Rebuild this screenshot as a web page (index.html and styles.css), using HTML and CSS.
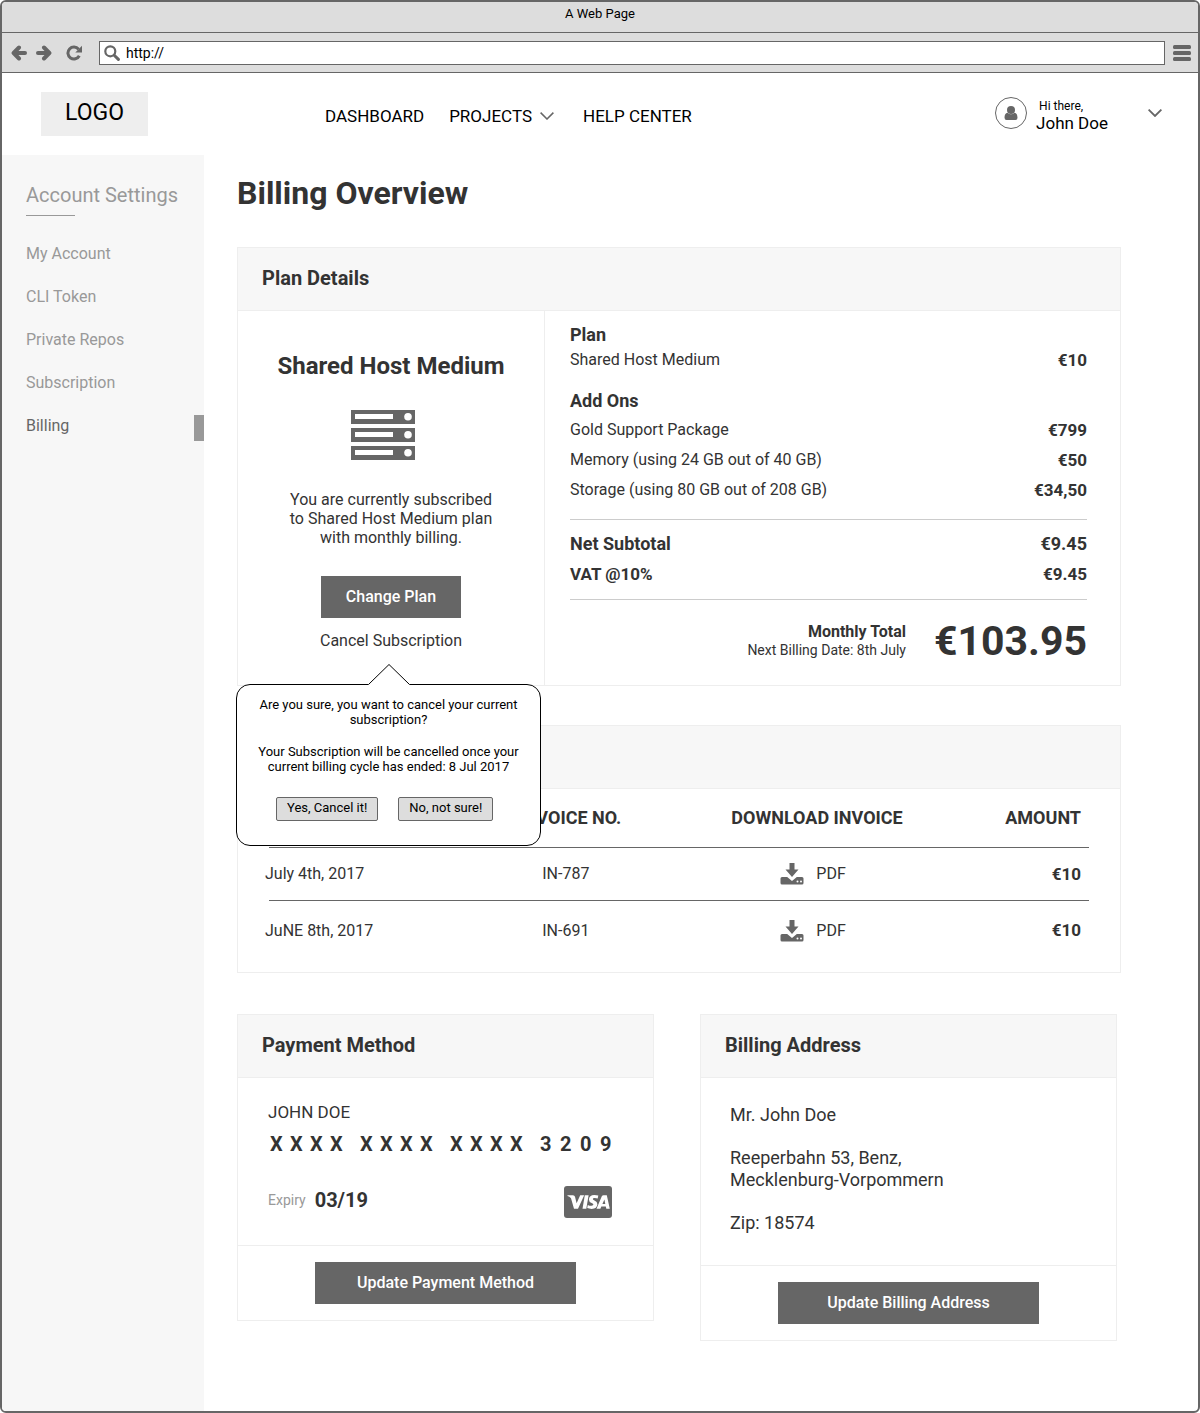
FILE: index.html
```html
<!DOCTYPE html>
<html lang="en">
<head>
<meta charset="utf-8">
<meta name="viewport" content="width=device-width, initial-scale=1">
<title>Billing Overview</title>
<link rel="stylesheet" href="styles.css">
</head>
<body>
<div class="window">
  <div class="titlebar">A Web Page</div>
  <div class="toolbar">
    <button class="tool" type="button" aria-label="Back">
      <svg width="16" height="16" viewBox="0 0 16 16" fill="none" stroke="#666" stroke-width="4" stroke-linecap="round" stroke-linejoin="round"><path d="M14 8H4"/><path d="M8 2.500L2.600 8L8 13.500"/></svg>
    </button>
    <button class="tool tool-next" type="button" aria-label="Forward">
      <svg width="16" height="16" viewBox="0 0 16 16" fill="none" stroke="#666" stroke-width="4" stroke-linecap="round" stroke-linejoin="round"><path d="M2 8h10"/><path d="M8 2.500L13.400 8L8 13.500"/></svg>
    </button>
    <button class="tool tool-reload" type="button" aria-label="Reload">
      <svg width="16" height="16" viewBox="0 0 16 16"><path d="M12.600 4.200A6 6 0 1 0 13.300 10.700" fill="none" stroke="#666" stroke-width="3"/><path d="M16 0.800V7.500H9.300Z" fill="#666"/></svg>
    </button>
    <label class="address">
      <svg width="16" height="16" viewBox="0 0 16 16" fill="none" stroke="#666"><circle cx="6.300" cy="6.300" r="5" stroke-width="2.200"/><path d="M10.200 10.200l4.200 4.200" stroke-width="3" stroke-linecap="round"/></svg>
      <input class="address-input" type="text" value="http://" aria-label="Address">
    </label>
    <button class="tool" type="button" aria-label="Menu">
      <svg width="18" height="16" viewBox="0 0 18 16" fill="#666"><rect width="18" height="4" rx="1.500"/><rect y="6" width="18" height="4" rx="1.500"/><rect y="12" width="18" height="4" rx="1.500"/></svg>
    </button>
  </div>

  <header class="header">
    <a class="logo" href="#">LOGO</a>
    <nav class="nav" aria-label="Main">
      <a href="#">DASHBOARD</a>
      <a class="nav-drop" href="#">PROJECTS
        <svg width="14" height="8" viewBox="0 0 14 8" fill="none" stroke="#666" stroke-width="1.500"><path d="M.6.600L7 7l6.400-6.400"/></svg>
      </a>
      <a href="#">HELP CENTER</a>
    </nav>
    <button class="user" type="button">
      <span class="avatar">
        <svg width="14" height="14" viewBox="0 0 14 14" fill="#666"><circle cx="7" cy="4" r="4"/><path d="M3.500 6.700Q7 10 10.500 6.700Q13.500 7.500 13.500 11.500Q13.500 14 11.500 14H2.500Q.5 14 .5 11.500Q.5 7.500 3.500 6.700Z"/></svg>
      </span>
      <span class="user-text"><span class="user-hi">Hi there,</span><span class="user-name">John Doe</span></span>
      <svg width="14" height="8" viewBox="0 0 14 8" fill="none" stroke="#666" stroke-width="1.800"><path d="M.6.600L7 7l6.400-6.400"/></svg>
    </button>
  </header>

  <div class="layout">
    <aside class="sidebar">
      <h2 class="sidebar-title">Account Settings</h2>
      <nav class="side-nav" aria-label="Account settings">
        <a href="#">My Account</a>
        <a href="#">CLI Token</a>
        <a href="#">Private Repos</a>
        <a href="#">Subscription</a>
        <a class="active" href="#" aria-current="page">Billing</a>
      </nav>
    </aside>

    <main class="main">
      <h1>Billing Overview</h1>

      <section class="card">
        <h2 class="card-title">Plan Details</h2>
        <div class="plan">
          <div class="plan-summary">
            <h3 class="plan-name">Shared Host Medium</h3>
            <svg class="server" width="80" height="52" viewBox="0 0 80 52">
              <g fill="#666"><rect y="1" width="64" height="14"/><rect y="19" width="64" height="14"/><rect y="37" width="64" height="14"/></g>
              <g fill="#fff"><rect x="4" y="5" width="38" height="5"/><rect x="4" y="23" width="38" height="5"/><rect x="4" y="41" width="38" height="5"/><circle cx="57" cy="7.700" r="3.800"/><circle cx="57" cy="25.700" r="3.800"/><circle cx="57" cy="43.700" r="3.800"/></g>
            </svg>
            <p class="plan-text">You are currently subscribed<br>to Shared Host Medium plan<br>with monthly billing.</p>
            <button class="btn" type="button">Change Plan</button>
            <div class="cancel">
              <a href="#">Cancel Subscription</a>
              <div class="popover" role="dialog" aria-label="Cancel subscription">
                <svg class="popover-arrow" width="42" height="22" viewBox="0 0 42 22"><path d="M0 22L.5 20.500L21 .5L41.500 20.500L42 22Z" fill="#fff"/><path d="M.5 20.500L21 .5L41.500 20.500" fill="none" stroke="#000"/></svg>
                <p>Are you sure, you want to cancel your current subscription?</p>
                <p>Your Subscription will be cancelled once your current billing cycle has ended: 8 Jul 2017</p>
                <div class="popover-actions">
                  <button class="btn-small" type="button">Yes, Cancel it!</button>
                  <button class="btn-small" type="button">No, not sure!</button>
                </div>
              </div>
            </div>
          </div>

          <div class="plan-costs">
            <h3 class="cost-title">Plan</h3>
            <div class="cost"><span>Shared Host Medium</span><b>€10</b></div>
            <h3 class="cost-title addons">Add Ons</h3>
            <div class="cost"><span>Gold Support Package</span><b>€799</b></div>
            <div class="cost"><span>Memory (using 24 GB out of 40 GB)</span><b>€50</b></div>
            <div class="cost"><span>Storage (using 80 GB out of 208 GB)</span><b>€34,50</b></div>
            <div class="subtotals">
              <div class="cost cost-net"><b>Net Subtotal</b><b>€9.45</b></div>
              <div class="cost"><b>VAT @10%</b><b>€9.45</b></div>
            </div>
            <div class="total">
              <div class="total-text"><b>Monthly Total</b><span>Next Billing Date: 8th July</span></div>
              <strong class="total-sum">€103.95</strong>
            </div>
          </div>
        </div>
      </section>

      <section class="card invoices" aria-label="Invoices">
        <div class="card-title card-title-blank"></div>
        <table>
          <colgroup><col class="col-date"><col class="col-no"><col class="col-file"><col></colgroup>
          <thead>
            <tr><th aria-label="Date"></th><th>INVOICE NO.</th><th>DOWNLOAD INVOICE</th><th class="right">AMOUNT</th></tr>
          </thead>
          <tbody>
            <tr>
              <td class="left">July 4th, 2017</td><td>IN-787</td>
              <td><a class="file" href="#"><svg width="24" height="22" viewBox="0 0 24 22"><path fill="#666" d="M9.500 0h5v6.500h4L12 14 5.500 6.500h4zM2 14h5.200l4.800 4 4.800-4H22q1.500 0 1.500 1.500v4.500q0 1.500-1.500 1.500H2Q.5 21.500.5 20v-4.500Q.5 14 2 14z"/><circle cx="17.500" cy="18.500" r="1" fill="#fff"/><circle cx="21" cy="18.500" r="1" fill="#fff"/></svg>PDF</a></td>
              <td class="right"><b>€10</b></td>
            </tr>
            <tr>
              <td class="left">JuNE 8th, 2017</td><td>IN-691</td>
              <td><a class="file" href="#"><svg width="24" height="22" viewBox="0 0 24 22"><path fill="#666" d="M9.500 0h5v6.500h4L12 14 5.500 6.500h4zM2 14h5.200l4.800 4 4.800-4H22q1.500 0 1.500 1.500v4.500q0 1.500-1.500 1.500H2Q.5 21.500.5 20v-4.500Q.5 14 2 14z"/><circle cx="17.500" cy="18.500" r="1" fill="#fff"/><circle cx="21" cy="18.500" r="1" fill="#fff"/></svg>PDF</a></td>
              <td class="right"><b>€10</b></td>
            </tr>
          </tbody>
        </table>
      </section>

      <div class="pair">
        <section class="card">
          <h2 class="card-title">Payment Method</h2>
          <div class="payment">
            <div class="holder">JOHN DOE</div>
            <div class="digits">
              <span><i>X</i><i>X</i><i>X</i><i>X</i></span>
              <span><i>X</i><i>X</i><i>X</i><i>X</i></span>
              <span><i>X</i><i>X</i><i>X</i><i>X</i></span>
              <span><i>3</i><i>2</i><i>0</i><i>9</i></span>
            </div>
            <div class="expiry">
              <span class="expiry-label">Expiry</span><b>03/19</b>
              <svg class="visa" width="48" height="32" viewBox="0 0 48 32" role="img" aria-label="Visa"><rect width="48" height="32" rx="3" fill="#666"/><g fill="#fff"><path d="M3.500 9.200H9q1.600 0 2 1.600l1.600 6.500 3.600-8.100h4L14 22.700h-4L7 12.200Q5.500 10.600 3.500 10z"/><path d="M20.800 9.200h3.800l-2.300 13.500h-3.800z"/><path d="M34.300 9.600l-.6 3q-1.700-.8-3.200-.7-1.700.2-1.700 1 0 .7 1.700 1.500 2.900 1.300 2.900 3.800-.3 4.600-5.700 4.700-2.600 0-4.500-.8l.6-3.200q2 1 3.700.9 1.900-.1 1.900-1.200 0-.7-1.800-1.500-2.700-1.300-2.700-3.700.3-4.300 5.400-4.400 2.300 0 4 .6z"/><path fill-rule="evenodd" d="M39.500 9.200h3.300l3 13.500h-3.500l-.5-2.200h-4.500l-.9 2.200h-3.900l5.300-12.400q.5-1.100 1.700-1.100zm.9 4.200l-2 4.500h2.900z"/></g></svg>
            </div>
          </div>
          <div class="card-foot"><button class="btn btn-wide" type="button">Update Payment Method</button></div>
        </section>

        <section class="card">
          <h2 class="card-title">Billing Address</h2>
          <address class="billing">
            <p>Mr. John Doe</p>
            <p>Reeperbahn 53, Benz,<br>Mecklenburg-Vorpommern</p>
            <p>Zip: 18574</p>
          </address>
          <div class="card-foot"><button class="btn btn-wide" type="button">Update Billing Address</button></div>
        </section>
      </div>
    </main>
  </div>
</div>
</body>
</html>
```
FILE: styles.css
```css
* { box-sizing: border-box; }

body {
  margin: 0;
  background: #fff;
  color: #333;
  font: 16px/20px Roboto, "Liberation Sans", sans-serif;
}

h1, h2, h3, p { margin: 0; }
a { color: inherit; text-decoration: none; }
button { font: inherit; color: inherit; border: 0; padding: 0; background: none; cursor: pointer; }
svg { display: block; flex: none; }

/* Browser window */
.window {
  display: flex;
  flex-direction: column;
  min-height: 100vh;
  border: 2px solid #666;
  border-radius: 6px;
  overflow: hidden;
}
.titlebar {
  padding: 2px 0 8px;
  background: #ddd;
  border-bottom: 1px solid #666;
  color: #000;
  font-size: 13px;
  text-align: center;
}
.toolbar {
  display: flex;
  align-items: center;
  padding: 8px 7px 7px 9px;
  background: #ddd;
  border-bottom: 1px solid #666;
}
.tool-next { margin-left: 9px; }
.tool-reload { margin: 0 17px 0 14px; }
.address {
  display: flex;
  align-items: center;
  flex: 1;
  gap: 6px;
  height: 24px;
  margin-right: 8px;
  padding: 0 4px;
  background: #fff;
  border: 1px solid #666;
}
.address-input {
  flex: 1;
  min-width: 0;
  padding: 0;
  border: 0;
  outline: 0;
  background: none;
  color: #000;
  font: 14px/20px Roboto, "Liberation Sans", sans-serif;
}

/* Site header */
.header {
  display: flex;
  align-items: flex-start;
  padding: 19px 36px 19px 39px;
  color: #000;
}
.logo {
  width: 107px;
  height: 44px;
  background: #eee;
  font-size: 23px;
  line-height: 42px;
  text-align: center;
}
.nav {
  display: flex;
  gap: 25px;
  margin: 14px 0 0 177px;
  font-size: 17px;
}
.nav-drop { display: flex; align-items: center; gap: 8px; margin-right: 4px; }
.user {
  display: flex;
  align-items: center;
  margin: 2px 0 0 auto;
  text-align: left;
}
.avatar {
  display: flex;
  align-items: center;
  justify-content: center;
  width: 32px;
  height: 32px;
  border: 1px solid #666;
  border-radius: 50%;
}
.user-text { display: flex; flex-direction: column; margin: 0 40px 0 9px; padding-top: 4px; }
.user-hi { padding-left: 3px; font-size: 12px; line-height: 16px; }
.user-name { font-size: 17px; line-height: 18px; }

/* Layout */
.layout { display: flex; flex: 1; }
.sidebar {
  flex: 0 0 202px;
  padding-top: 28px;
  background: #f7f7f7;
  color: #999;
}
.sidebar-title {
  padding-left: 24px;
  font-size: 20px;
  line-height: 24px;
  font-weight: 400;
}
.sidebar-title::after {
  content: "";
  display: block;
  width: 49px;
  margin-top: 8px;
  border-top: 1px solid #999;
}
.side-nav { margin-top: 16px; line-height: 43px; }
.side-nav a {
  display: flex;
  align-items: center;
  justify-content: space-between;
  padding-left: 24px;
}
.side-nav .active { color: #666; }
.side-nav .active::after {
  content: "";
  width: 10px;
  height: 26px;
  margin-top: 4px;
  background: #999;
}
.main { flex: 1; min-width: 0; padding: 18px 77px 48px 33px; }

h1 { margin-bottom: 34px; font-size: 32px; line-height: 40px; }

/* Cards */
.card { border: 1px solid #eee; }
.card-title {
  padding: 18px 24px 20px;
  background: #f7f7f7;
  border-bottom: 1px solid #eee;
  font-size: 20px;
  line-height: 24px;
}
.card-title-blank { height: 63px; }
.card-foot {
  display: flex;
  justify-content: center;
  padding: 16px 0;
  border-top: 1px solid #eee;
}
.btn {
  width: 140px;
  height: 42px;
  background: #666;
  color: #fff;
  font-weight: 500;
}
.btn-wide { width: 261px; }

/* Plan details */
.plan { display: flex; }
.plan-summary {
  display: flex;
  flex-direction: column;
  align-items: center;
  flex: 0 0 307px;
  padding-top: 39px;
  border-right: 1px solid #eee;
  text-align: center;
}
.plan-name { font-size: 24px; line-height: 32px; }
.server { margin-top: 27px; }
.plan-text { margin: 29px 0; line-height: 19px; }
.cancel { position: relative; align-self: stretch; margin-top: 13px; }

.popover {
  position: absolute;
  z-index: 1;
  top: 53px;
  left: -2px;
  width: 305px;
  padding: 12px 12px 24px;
  background: #fff;
  border: 1px solid #000;
  border-radius: 14px;
  color: #000;
  font-size: 13px;
  line-height: 15px;
}
.popover p { margin-bottom: 17px; }
.popover-arrow { position: absolute; top: -21px; left: 131px; }
.popover-actions { display: flex; gap: 20px; padding: 6px 0 0 27px; }
.btn-small {
  height: 24px;
  padding: 0 10px 3px;
  background: #ddd;
  border: 1px solid #666;
  border-radius: 2px;
}

.plan-costs { flex: 1; padding: 14px 33px 20px 25px; }
.cost-title { font-size: 18px; line-height: 20px; }
.addons { margin: 16px 0 4px; }
.cost {
  display: flex;
  justify-content: space-between;
  line-height: 30px;
}
.cost b, td b { font-size: 17px; }
.cost-net b { font-size: 18px; }
.subtotals {
  margin-top: 14px;
  padding: 9px 0 10px;
  border: solid #ccc;
  border-width: 1px 0;
}
.total {
  display: flex;
  align-items: center;
  justify-content: flex-end;
  gap: 28px;
  margin-top: 17px;
}
.total-text { text-align: right; line-height: 19px; }
.total-text span { display: block; font-size: 14px; }
.total-sum { font-size: 41px; line-height: 48px; }

/* Invoices */
.invoices { margin: 39px 0 41px; padding-bottom: 11px; }
table {
  width: calc(100% - 58px);
  margin-left: 27px;
  border-collapse: collapse;
  table-layout: fixed;
}
.col-date { width: 22%; }
.col-no, .col-file { width: 30%; }
th, td { padding: 0 0 1px; text-align: center; }
th { height: 59px; font-size: 18px; }
td { height: 60px; }
tbody tr:first-child td { height: 53px; }
thead tr, tbody tr:first-child {
  background: linear-gradient(#666, #666) right bottom / calc(100% - 4px) 1px no-repeat;
}
td:nth-child(2), td:nth-child(3) { padding-right: 8px; }
.left { text-align: left; }
.right { padding-right: 8px; text-align: right; }
.file { display: inline-flex; align-items: center; gap: 12px; vertical-align: middle; }

/* Payment and address */
.pair {
  display: grid;
  grid-template-columns: repeat(2, minmax(0, 1fr));
  align-items: start;
  gap: 46px;
  padding-right: 4px;
}
.payment { padding: 24px 41px 27px 30px; }
.holder { font-size: 17px; }
.digits {
  display: flex;
  gap: 10px;
  margin: 10px 0 30px;
  padding-left: 2px;
  font-size: 20px;
  line-height: 24px;
  font-weight: 700;
}
.digits span { display: flex; }
.digits i { width: 20px; font-style: normal; }
.expiry { display: flex; gap: 9px; line-height: 28px; }
.expiry b { font-size: 20px; }
.expiry-label { color: #999; font-size: 14px; }
.visa { margin-left: auto; }
.billing {
  display: flex;
  flex-direction: column;
  gap: 21px;
  padding: 26px 29px 31px;
  font-size: 18px;
  line-height: 22px;
  font-style: normal;
}
```
